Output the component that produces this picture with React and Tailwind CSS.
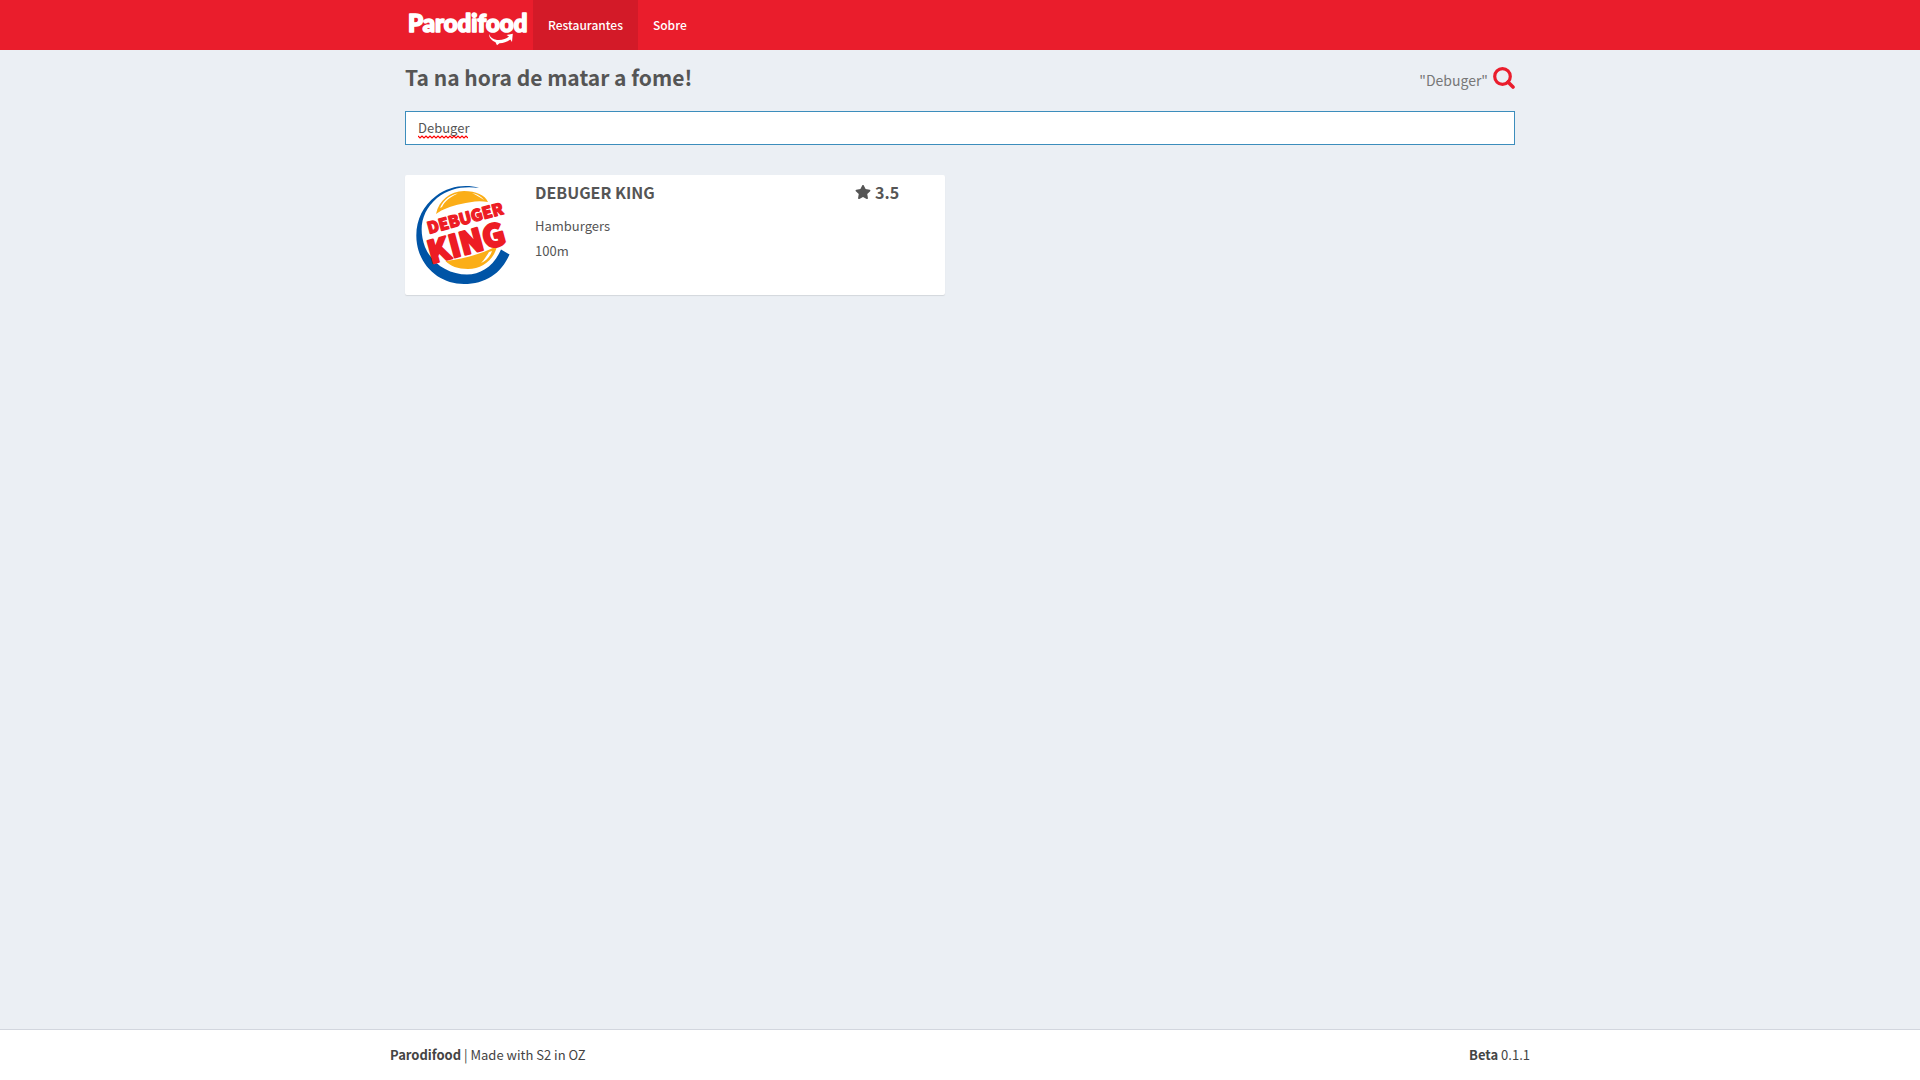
import { useState } from "react";
import { FaStar } from "react-icons/fa";

const restaurants = [
  { name: "DEBUGER KING", category: "Hamburgers", distance: "100m", rating: "3.5" },
];

function BrandLogo() {
  return (
    <svg viewBox="0 0 128 50" className="h-[50px] w-32" role="img" aria-label="Parodifood">
      <text
        x="3"
        y="32"
        fill="#fff"
        stroke="#fff"
        strokeWidth="1.6"
        strokeLinejoin="round"
        className="font-['Lato',sans-serif] text-[24px] font-black"
      >
        Parodifood
      </text>
      <path
        fill="#fff"
        stroke="#ea1d2c"
        strokeWidth="1"
        paintOrder="stroke"
        d="M84 34C85 37 88 39.500 92 40C97 40.500 101 39 104 36.500L101.500 35L107.800 33.800L107 42L105.300 39.500C102 42 98 43.300 94.500 43.200L92 45.200L90.500 42.300C86.500 40.500 84 37.500 84 34Z"
      />
    </svg>
  );
}

function SearchIcon() {
  return (
    <svg viewBox="0 0 22 22" className="size-[22px] text-[#ea1d2c]" fill="none" stroke="currentColor" aria-hidden="true">
      <circle cx="9.500" cy="9.500" r="7.800" strokeWidth="3.200" />
      <path d="M15 15L20 20" strokeWidth="3.600" strokeLinecap="round" />
    </svg>
  );
}

function SpellingMark() {
  return (
    <svg viewBox="0 0 50 4" className="pointer-events-none absolute top-6 left-[13px] h-1 w-[50px]" aria-hidden="true">
      <path
        d="M0 1L2 3L4 1L6 3L8 1L10 3L12 1L14 3L16 1L18 3L20 1L22 3L24 1L26 3L28 1L30 3L32 1L34 3L36 1L38 3L40 1L42 3L44 1L46 3L48 1L50 3"
        fill="none"
        stroke="#f00"
        strokeWidth="1.200"
      />
    </svg>
  );
}

function BurgerLogo() {
  return (
    <svg viewBox="0 0 110 110" className="size-[110px]" role="img" aria-label="Debuger King">
      <path
        fill="#0054a6"
        d="M71 10C58 6 41 8 28 18C13 29 6 47 9 66C13 90 33 106 56 106C77 106 93 96 101.500 76.500L93 71.500C86 88 73 96.500 59 96.500C41 96.500 24 86 17 69C10 50 14 33 29 20C42 10 56 8 71 10Z"
      />
      <path
        fill="#fbae17"
        d="M28 36C31 22 42 13.500 56 13C68 13 77 17 80 24C70 22 62 24 53 26C43 28 35 31 28 36Z"
      />
      <path fill="#fff" d="M32 30C36 21 43 16.500 50 15.500C42 19 37 23 34 29Z" />
      <path fill="#fff" d="M64 15C69 16 74 19 76 22C72 19 68 17 64 15Z" />
      <path
        fill="#fbae17"
        d="M37.500 83C53 81 72 77 89 68C86 82 74 91 60 91C50 91 42 88 37.500 83Z"
      />
      <path fill="#fff" d="M84 73C82 79 78 83 73 85C77 81 79 77 81 74Z" />
      <g
        fill="#ed1c24"
        stroke="#ed1c24"
        strokeLinejoin="round"
        className="font-['Noto_Sans_CJK_JP',sans-serif] font-black"
      >
        <text x="21" y="56" strokeWidth="1.2" transform="rotate(-15 21 56)" className="text-[16px]">
          DEBUGER
        </text>
        <text x="23" y="86" strokeWidth="2" transform="rotate(-15 23 86)" className="text-[31px]">
          KING
        </text>
      </g>
    </svg>
  );
}

function RestaurantCard({ restaurant }) {
  return (
    <article className="flex h-[120px] rounded-[2px] bg-white shadow-[0_1px_1px_rgba(0,0,0,0.1)]">
      <div className="w-[130px] shrink-0 pt-[3px] pl-[3px]">
        <BurgerLogo />
      </div>
      <div className="flex-1 pt-[7px]">
        <h2 className="text-[16px] leading-5 font-bold">{restaurant.name}</h2>
        <p className="mt-[11px] text-[13px] leading-[25px]">{restaurant.category}</p>
        <p className="text-[13px] leading-[25px]">{restaurant.distance}</p>
      </div>
      <div className="flex w-[90px] items-start gap-1 pt-[7px] text-[16px] leading-5 font-bold">
        <FaStar className="mt-[2px] size-4" />
        <span>{restaurant.rating}</span>
      </div>
    </article>
  );
}

export default function App() {
  const [query, setQuery] = useState("Debuger");

  return (
    <div className="flex min-h-screen flex-col bg-[#ebeff4] font-['Noto_Sans_CJK_JP',sans-serif] text-[13px] text-[#555]">
      <header className="bg-[#ea1d2c] text-white">
        <nav className="mx-auto flex h-[50px] max-w-[1110px] text-[12px] font-medium">
          <a href="#home">
            <BrandLogo />
          </a>
          <a href="#restaurantes" className="flex items-center bg-[#d31a28] px-[15px]">
            Restaurantes
          </a>
          <a href="#sobre" className="flex items-center px-[15px]">
            Sobre
          </a>
        </nav>
      </header>

      <main className="mx-auto w-full max-w-[1110px] flex-1">
        <div className="flex h-[61px] items-start justify-between pt-[11px]">
          <h1 className="text-[21px] leading-8 font-bold">Ta na hora de matar a fome!</h1>
          <button type="button" aria-label="Buscar" className="flex items-center gap-[5px] pt-[3px] text-[14px] leading-6 text-[#777]">
            <span className="pt-1">"{query}"</span>
            <SearchIcon />
          </button>
        </div>
        <div className="relative">
          <input
            type="text"
            aria-label="Buscar restaurante"
            value={query}
            onChange={(event) => setQuery(event.target.value)}
            spellCheck={false}
            className="block h-[34px] w-full border border-[#3c8dbc] bg-white px-3 pb-[2px] outline-none"
          />
          {query === "Debuger" && <SpellingMark />}
        </div>
        <section className="mt-[30px] grid grid-cols-2 gap-[30px]">
          {restaurants.map((restaurant) => (
            <RestaurantCard key={restaurant.name} restaurant={restaurant} />
          ))}
        </section>
      </main>

      <footer className="border-t border-[#d2d6de] bg-white text-[#444]">
        <div className="mx-auto flex max-w-[1140px] justify-between py-[15px] leading-5">
          <p>
            <strong>Parodifood</strong> | Made with S2 in OZ
          </p>
          <p>
            <strong>Beta</strong> 0.1.1
          </p>
        </div>
      </footer>
    </div>
  );
}
